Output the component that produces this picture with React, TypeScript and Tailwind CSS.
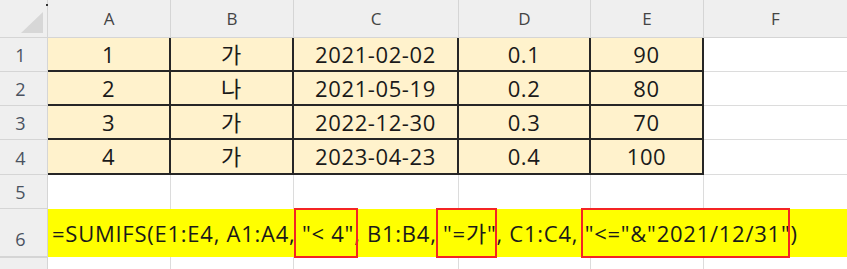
import type { ReactNode } from 'react';

const COLS = [
  { key: 'A', w: 'w-[123px]' },
  { key: 'B', w: 'w-[123px]' },
  { key: 'C', w: 'w-[165px]' },
  { key: 'D', w: 'w-[132px]' },
  { key: 'E', w: 'w-[113px]' },
];

const ROWS: string[][] = [
  ['1', '가', '2021-02-02', '0.1', '90'],
  ['2', '나', '2021-05-19', '0.2', '80'],
  ['3', '가', '2022-12-30', '0.3', '70'],
  ['4', '가', '2023-04-23', '0.4', '100'],
];

function RowHeader({ n, className = '' }: { n?: number; className?: string }) {
  return (
    <div
      className={`w-[48px] shrink-0 bg-[#efefef] border-r border-b border-[#d5d5d5] flex items-end justify-center pr-[6px] pb-[7px] text-[18px] leading-none text-[#4a5260] ${className}`}
    >
      {n}
    </div>
  );
}

// red highlight box drawn over a piece of the formula
function Boxed({
  children,
  left = '-left-[3px]',
  right = '-right-[4px]',
}: {
  children: ReactNode;
  left?: string;
  right?: string;
}) {
  return (
    <span className="relative flex items-center whitespace-pre">
      {children}
      <span className={`absolute ${left} ${right} -top-[1px] -bottom-[1px] border-2 border-[#f42424]`} />
    </span>
  );
}

export default function App() {
  return (
    <div className="w-[847px] h-[269px] overflow-hidden bg-white font-['Open_Sans','Noto_Sans_CJK_KR',sans-serif] text-[#1a1a1a]">
      {/* column headers */}
      <div className="flex h-[38px]">
        <div className="relative w-[48px] shrink-0 bg-[#efefef] border-r border-b border-[#d5d5d5]">
          <span className="absolute left-[46px] top-[4px] w-[2px] h-[2px] bg-[#333]" />
          <svg className="absolute left-0 top-0" width="48" height="38" viewBox="0 0 48 38">
            <polygon points="43,12 43,33 21,33" fill="#d7d7d7" />
          </svg>
        </div>
        {COLS.map((c) => (
          <div
            key={c.key}
            className={`${c.w} shrink-0 bg-[#efefef] border-r border-b border-[#d5d5d5] flex items-center justify-center text-[17px] text-[#444]`}
          >
            {c.key}
          </div>
        ))}
        <div className="flex-1 bg-[#efefef] border-b border-[#d5d5d5] flex items-center justify-center text-[17px] text-[#444]">
          F
        </div>
      </div>

      {/* data rows */}
      {ROWS.map((row, i) => (
        <div key={i} className={`flex ${i === 3 ? 'h-[35px]' : 'h-[34px]'}`}>
          <RowHeader n={i + 1} />
          {row.map((v, j) => (
            <div
              key={j}
              className={`${COLS[j].w} shrink-0 bg-[#fff2cc] border-r-2 border-b-2 border-[#262626] flex items-center justify-center text-[22px] tracking-[0.6px]`}
            >
              {v}
            </div>
          ))}
          <div className="flex-1 border-b border-[#dcdcdc]" />
        </div>
      ))}

      {/* empty row 5 */}
      <div className="flex h-[34px]">
        <RowHeader n={5} />
        {COLS.map((c) => (
          <div key={c.key} className={`${c.w} shrink-0 border-r border-[#dcdcdc]`} />
        ))}
        <div className="flex-1" />
      </div>

      {/* formula row 6 */}
      <div className="flex h-[48px]">
        <RowHeader n={6} className="pb-[8px]" />
        <div className="flex-1 bg-[#ffff00] flex items-stretch pl-[4px] text-[22px] tracking-[0.75px] whitespace-pre">
          <span className="flex items-center">=SUMIFS(E1:E4, A1:A4, </span>
          <Boxed left="-left-[8px]">"&lt; 4"</Boxed>
          <span className="flex items-center">, B1:B4, </span>
          <Boxed left="-left-[7px]" right="-right-[1px]">"=가"</Boxed>
          <span className="flex items-center">, C1:C4, </span>
          <Boxed left="-left-[4px]" right="right-[0px]">"&lt;="&amp;"2021/12/31"</Boxed>
          <span className="flex items-center">)</span>
        </div>
      </div>

      {/* row 7 (partially visible) */}
      <div className="flex h-[12px]">
        <div className="w-[48px] shrink-0 bg-[#efefef] border-r border-t border-[#d5d5d5]" />
        {COLS.map((c) => (
          <div key={c.key} className={`${c.w} shrink-0 border-r border-[#dcdcdc]`} />
        ))}
        <div className="flex-1" />
      </div>
    </div>
  );
}
